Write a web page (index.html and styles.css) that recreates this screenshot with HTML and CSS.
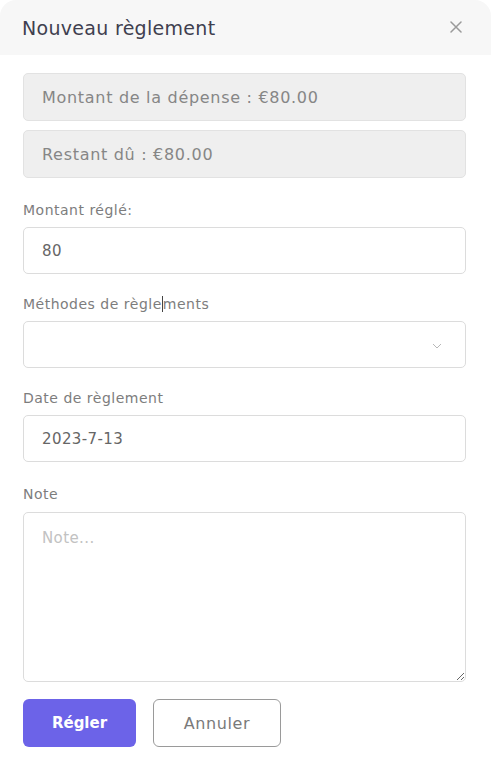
FILE: index.html
```html
<!DOCTYPE html>
<html lang="fr">
<head>
<meta charset="utf-8">
<title>Nouveau règlement</title>
<link rel="stylesheet" href="styles.css">
</head>
<body>
<div class="modal">
  <div class="modal-header">
    <h1 class="modal-title">Nouveau règlement</h1>
    <button class="close-btn" aria-label="Fermer">
      <svg width="12" height="12" viewBox="0 0 12 12"><path d="M1 1 L11 11 M11 1 L1 11" stroke="#9a9a9a" stroke-width="1.5" fill="none" stroke-linecap="round"/></svg>
    </button>
  </div>
  <div class="modal-body">
    <div class="readonly">Montant de la dépense : €80.00</div>
    <div class="readonly">Restant dû : €80.00</div>

    <div class="field">
      <label class="label">Montant réglé:</label>
      <div class="input">80</div>
    </div>

    <div class="field">
      <label class="label">Méthodes de règle<span class="caret"></span>ments</label>
      <div class="input select">
        <svg class="chevron" width="10" height="6" viewBox="0 0 10 6"><path d="M1 1 L5 5 L9 1" stroke="#b8b8b8" stroke-width="1" fill="none"/></svg>
      </div>
    </div>

    <div class="field">
      <label class="label">Date de règlement</label>
      <div class="input">2023-7-13</div>
    </div>

    <div class="field field-note">
      <label class="label">Note</label>
      <textarea class="textarea" placeholder="Note..."></textarea>
    </div>

    <div class="actions">
      <button class="btn btn-primary">Régler</button>
      <button class="btn btn-outline">Annuler</button>
    </div>
  </div>
</div>
</body>
</html>
```

FILE: styles.css
```css
* { box-sizing: border-box; }
html, body {
  margin: 0;
  padding: 0;
  background: #ffffff;
}
body {
  font-family: "DejaVu Sans", "Open Sans", sans-serif;
  color: #555;
}
.modal {
  width: 491px;
  background: #fff;
}
.modal-header {
  height: 55px;
  background: #f7f7f7;
  border-radius: 16px 16px 0 0;
  display: flex;
  align-items: center;
  justify-content: space-between;
  padding: 0 29px 0 22px;
}
.modal-title {
  margin: 0;
  font-size: 19px;
  font-weight: 400;
  color: #3f3f4f;
  letter-spacing: 0.3px;
}
.close-btn {
  border: 0;
  background: none;
  padding: 0;
  display: flex;
  margin-top: -2px;
}
.modal-body {
  padding: 18px 25px 0 23px;
  display: flex;
  flex-direction: column;
}
.readonly {
  height: 48px;
  background: #efefef;
  border: 1px solid #e2e2e2;
  border-radius: 5px;
  padding-left: 18px;
  display: flex;
  align-items: center;
  font-size: 16px;
  letter-spacing: 0.7px;
  color: #868686;
  margin-bottom: 9px;
}
.field {
  display: flex;
  flex-direction: column;
  margin-top: 20px;
}
.readonly + .field { margin-top: 13px; }
.label {
  font-size: 14px;
  line-height: 20px;
  letter-spacing: 0.5px;
  color: #7d7d7d;
  margin-bottom: 7px;
}
.field-note .label { margin-bottom: 8px; }
.field-note { margin-top: 22px; }
.caret {
  display: inline-block;
  width: 1px;
  height: 16px;
  background: #444;
  vertical-align: -3px;
}
.input {
  height: 47px;
  border: 1px solid #dcdcdc;
  border-radius: 5px;
  padding-left: 18px;
  display: flex;
  align-items: center;
  font-size: 15px;
  letter-spacing: 0.4px;
  color: #666;
  background: #fff;
}
.select {
  justify-content: flex-end;
  padding-right: 23px;
}
.chevron { margin-top: 2px; }
.textarea {
  height: 170px;
  border: 1px solid #dcdcdc;
  border-radius: 5px;
  padding: 16px 18px;
  font-family: inherit;
  font-size: 15px;
  letter-spacing: 0.4px;
  color: #555;
  resize: vertical;
  outline: none;
}
.textarea::placeholder { color: #c2c2c2; }
.actions {
  display: flex;
  gap: 17px;
  margin-top: 17px;
}
.btn {
  height: 48px;
  border-radius: 6px;
  font-family: inherit;
  font-size: 15px;
  cursor: pointer;
}
.btn-primary {
  width: 113px;
  background: #6c63e8;
  border: 0;
  color: #fff;
  font-weight: 700;
}
.btn-outline {
  width: 128px;
  background: #fff;
  border: 1px solid #9a9a9a;
  color: #7a7a7a;
  font-size: 16px;
  letter-spacing: 0.6px;
  font-weight: 400;
}
```
